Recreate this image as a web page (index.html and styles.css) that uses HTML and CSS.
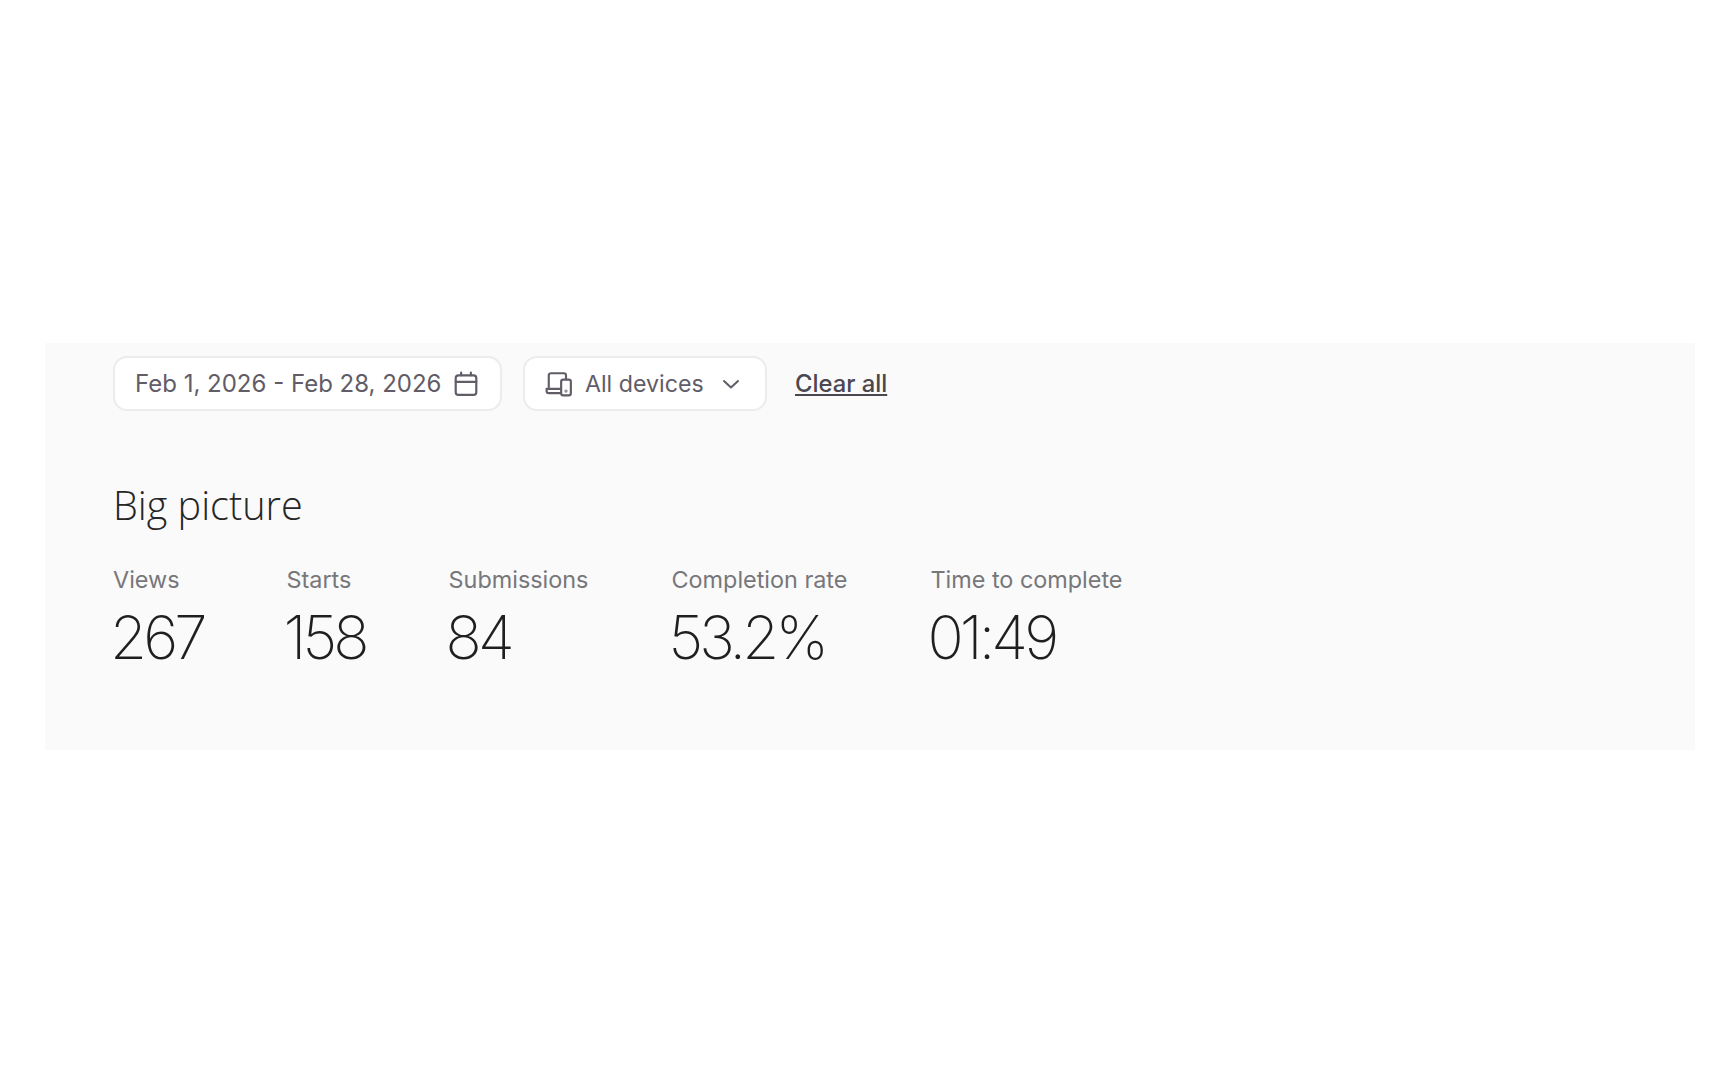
FILE: index.html
```html
<!DOCTYPE html>
<html lang="en">
<head>
  <meta charset="UTF-8">
  <title>Results</title>
  <link rel="stylesheet" href="styles.css">
</head>
<body>

<div class="panel">
  <div class="filters">
    <div class="filter date-filter">
      <span>Feb 1, 2026 - Feb 28, 2026</span>
      <svg class="icon" viewBox="0 0 24 24" fill="none" stroke="currentColor" stroke-width="2" stroke-linejoin="round" stroke-linecap="round">
        <rect x="2.5" y="4" width="19" height="18" rx="2.5"/>
        <path d="M2.5 10h19M7.5 1.5V4M16.5 1.5V4"/>
      </svg>
    </div>
    <div class="filter device-filter">
      <svg class="icon" viewBox="0 0 26 24" fill="none" stroke="currentColor" stroke-width="2" stroke-linejoin="round" stroke-linecap="round">
        <path d="M3.5 15V4a2 2 0 0 1 2-2h12a2 2 0 0 1 2 2v3"/>
        <path d="M14 16.5H1.5v2a2 2 0 0 0 2 2H14"/>
        <rect x="15" y="8" width="9" height="14.5" rx="2"/>
        <circle cx="19.5" cy="18.5" r="0.4"/>
      </svg>
      <span>All devices</span>
      <svg class="chevron" viewBox="0 0 18 10" fill="none" stroke="currentColor" stroke-width="2" stroke-linecap="round" stroke-linejoin="round">
        <path d="M2 2l7 6.5L16 2"/>
      </svg>
    </div>
    <a class="clear-link" href="#">Clear all</a>
  </div>

  <h2 class="section-title">Big picture</h2>

  <div class="stats">
    <div class="stat">
      <div class="stat-label">Views</div>
      <div class="stat-value">267</div>
    </div>
    <div class="stat">
      <div class="stat-label">Starts</div>
      <div class="stat-value">158</div>
    </div>
    <div class="stat">
      <div class="stat-label">Submissions</div>
      <div class="stat-value">84</div>
    </div>
    <div class="stat">
      <div class="stat-label">Completion rate</div>
      <div class="stat-value">53.2%</div>
    </div>
    <div class="stat">
      <div class="stat-label">Time to complete</div>
      <div class="stat-value">01:49</div>
    </div>
  </div>
</div>

</body>
</html>
```
FILE: styles.css
```css
body {
  margin: 0;
  padding: 343px 25px 330px 45px;
  background: #fff;
  font-family: Inter, sans-serif;
}
.panel {
  background: #fafafa;
  height: 394px;
  padding: 13px 68px 0;
}
.filters {
  display: flex;
  align-items: center;
}
.filter {
  display: flex;
  align-items: center;
  height: 55px;
  box-sizing: border-box;
  background: #fff;
  border: 2px solid #ececec;
  border-radius: 14px;
  color: #615c66;
  font-size: 24px;
  padding: 0 20px;
}
.date-filter {
  width: 389px;
  gap: 12px;
}
.device-filter {
  width: 244px;
  margin-left: 21px;
  font-size: 23.2px;
  gap: 12px;
}
.device-filter .icon {
  width: 28px;
  height: 28px;
}
.icon {
  width: 26px;
  height: 26px;
  flex: none;
}
.chevron {
  width: 18px;
  height: 10px;
  margin-left: 6px;
}
.clear-link {
  margin-left: 28px;
  color: #4b4650;
  font-size: 23.8px;
  font-weight: 500;
}
.section-title {
  margin: 69px 0 0;
  font-family: "Open Sans", sans-serif;
  font-size: 39.6px;
  font-weight: 300;
  line-height: 50px;
  color: #262627;
}
.stats {
  display: flex;
  gap: 83px;
  margin-top: 35px;
}
.stat-label {
  font-size: 23.4px;
  line-height: 30px;
  color: #77777a;
}
.stat-value {
  font-size: 60px;
  font-weight: 200;
  letter-spacing: -0.065em;
  line-height: 70px;
  margin: 7px 0 0 -3px;
  color: #1f1f20;
}
```
